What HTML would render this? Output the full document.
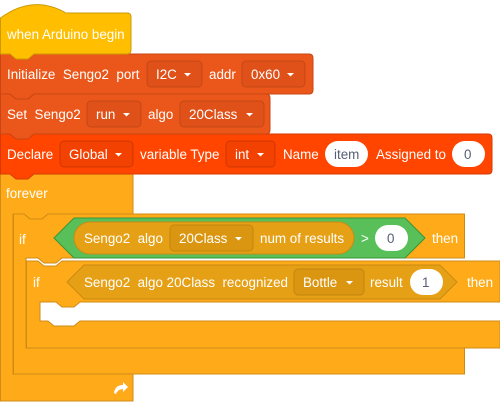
<!DOCTYPE html><html><head><style>body{margin:0;background:#fff}svg{display:block}text{font-family:"Liberation Sans",sans-serif;font-size:13.4px;fill:#fff;white-space:pre}</style></head><body>
<svg width="500" height="402" viewBox="0 0 500 402" xml:space="preserve">
<path d="M0.5 173 H133 V214 H48 l-6 5 h-12 l-6 -5 H13 V374 H133 V401 H0.5 Z" fill="#FFAB19" stroke="#CF8B17"/>
<path d="M13.5 214 H24 l6 5 h12 l6 -5 H464.5 V258 H62 l-6 5 h-12 l-6 -5 H26 V348 H464.5 V374 H13.5 Z" fill="#FFAB19" stroke="#CF8B17"/>
<path d="M26.5 261 H38 l6 5 h12 l6 -5 H500 V302 H80 l-6 5 h-12 l-6 -5 H40 V321 h8 l6 5 h20 l6 -5 H500 V348 H26.5 Z" fill="#FFAB19" stroke="#CF8B17"/>
<text x="6" y="198">forever</text>
<text x="19" y="244">if</text>
<text x="33" y="287">if</text>
<path d="M54 238 L74 218 H405 L425 238 L405 258 H74 Z" fill="#59C059" stroke="#389438"/>
<rect x="74" y="222" width="280" height="32" rx="16" fill="#E6A015" stroke="#C88A12"/>
<text x="84" y="243">Sengo2  algo</text>
<rect x="170" y="225" width="83" height="26" rx="4" fill="#DA9610" stroke="#C28510"/>
<text x="179" y="243">20Class</text><path d="M235 237 h7 l-3.5 3.5z" fill="#fff"/>
<text x="260" y="243">num of results</text>
<text x="361" y="243">&gt;</text>
<rect x="375" y="225" width="33" height="26" rx="13" fill="#fff"/>
<text x="387" y="243" style="fill:#575E75">0</text>
<text x="432" y="243">then</text>
<path d="M67 282 L84 265 H440 L457 282 L440 299 H84 Z" fill="#E6A015" stroke="#C88A12"/>
<text x="84" y="287">Sengo2  algo 20Class  recognized</text>
<rect x="294" y="269" width="70" height="26" rx="4" fill="#DA9610" stroke="#C28510"/>
<text x="303" y="287">Bottle</text><path d="M346 281 h7 l-3.5 3.5z" fill="#fff"/>
<text x="370" y="287">result</text>
<rect x="410" y="269" width="33" height="26" rx="13" fill="#fff"/>
<text x="422" y="287" style="fill:#575E75">1</text>
<text x="467" y="287">then</text>
<path d="M114 393 q1 -8 9 -8 v-3 l5 5 l-5 5 v-3 q-5 0 -7 5z" fill="#fff"/>
<path d="M0.5 134 H10 l6 5 h12 l6 -5 H488 q4 0 4 4 V170 q0 4 -4 4 H34 l-6 5 h-12 l-6 -5 H0.5 Z" fill="#FF4500" stroke="#D63A00"/>
<text x="7" y="159">Declare</text>
<rect x="60" y="141" width="73" height="26" rx="4" fill="#F24100" stroke="#D03800"/>
<text x="69" y="159">Global</text><path d="M115 153 h7 l-3.5 3.5z" fill="#fff"/>
<text x="140" y="159">variable Type</text>
<rect x="226" y="141" width="49" height="26" rx="4" fill="#F24100" stroke="#D03800"/>
<text x="235" y="159">int</text><path d="M257 153 h7 l-3.5 3.5z" fill="#fff"/>
<text x="283" y="159">Name</text>
<rect x="325" y="141" width="43" height="26" rx="13" fill="#fff"/>
<text x="334" y="159" style="fill:#575E75">item</text>
<text x="376" y="159">Assigned to</text>
<rect x="452" y="141" width="33" height="26" rx="13" fill="#fff"/>
<text x="464" y="159" style="fill:#575E75">0</text>
<path d="M0.5 94 H10 l6 5 h12 l6 -5 H266 q4 0 4 4 V130 q0 4 -4 4 H34 l-6 5 h-12 l-6 -5 H0.5 Z" fill="#EB571B" stroke="#C94614"/>
<text x="7" y="119">Set  Sengo2</text>
<rect x="87" y="101" width="54" height="26" rx="4" fill="#E0511A" stroke="#C44815"/>
<text x="96" y="119">run</text><path d="M123 113 h7 l-3.5 3.5z" fill="#fff"/>
<text x="148" y="119">algo</text>
<rect x="180" y="101" width="84" height="26" rx="4" fill="#E0511A" stroke="#C44815"/>
<text x="189" y="119">20Class</text><path d="M246 113 h7 l-3.5 3.5z" fill="#fff"/>
<path d="M0.5 54 H10 l6 5 h12 l6 -5 H309 q4 0 4 4 V90 q0 4 -4 4 H34 l-6 5 h-12 l-6 -5 H0.5 Z" fill="#EB571B" stroke="#C94614"/>
<text x="7" y="79">Initialize  Sengo2  port</text>
<rect x="147" y="61" width="55" height="26" rx="4" fill="#E0511A" stroke="#C44815"/>
<text x="156" y="79">I2C</text><path d="M184 73 h7 l-3.5 3.5z" fill="#fff"/>
<text x="209" y="79">addr</text>
<rect x="242" y="61" width="63" height="26" rx="4" fill="#E0511A" stroke="#C44815"/>
<text x="251" y="79">0x60</text><path d="M287 73 h7 l-3.5 3.5z" fill="#fff"/>
<path d="M0.5 18 Q33 -6 66 13 H127 q4 0 4 4 V50 q0 4 -4 4 H34 l-6 5 h-12 l-6 -5 H0.5 Z" fill="#FFBF00" stroke="#CC9900"/>
<text x="7" y="39">when Arduino begin</text>
</svg></body></html>
